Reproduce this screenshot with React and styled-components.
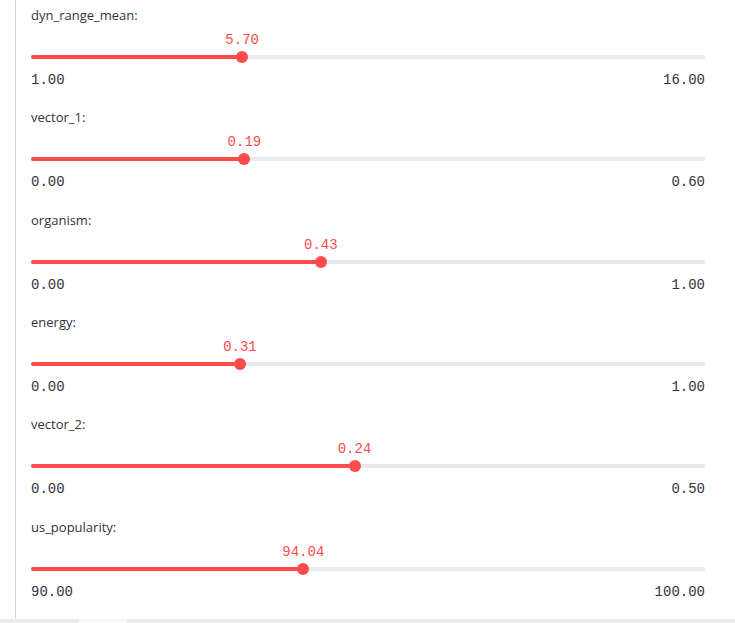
import React from 'react'
import styled, { createGlobalStyle } from 'styled-components'

const GlobalStyle = createGlobalStyle`
  html, body {
    margin: 0;
    padding: 0;
    background: #ffffff;
    overflow: hidden;
  }
`

const sliders = [
    { label: 'dyn_range_mean:', value: 5.7, min: 1, max: 16 },
    { label: 'vector_1:', value: 0.19, min: 0, max: 0.6 },
    { label: 'organism:', value: 0.43, min: 0, max: 1 },
    { label: 'energy:', value: 0.31, min: 0, max: 1 },
    { label: 'vector_2:', value: 0.24, min: 0, max: 0.5 },
    { label: 'us_popularity:', value: 94.04, min: 90, max: 100 },
]

const Page = styled.div`
  display: flex;
  flex-direction: column;
  width: 735px;
  height: 623px;
`

const Panel = styled.div`
  height: 619px;
  margin-left: 15px;
  width: 702px;
  border-left: 1px solid #d6d6d6;
  border-right: 1px solid #d6d6d6;
  padding: 0 13px 0 15px;
  box-sizing: content-box;
  display: flex;
  flex-direction: column;
  overflow: hidden;
`

const ScrollStrip = styled.div`
  height: 4px;
  background: #ececec;
  display: flex;
`

const ScrollThumb = styled.div`
  margin-left: 79px;
  width: 48px;
  background: #f7f7f7;
`

const Block = styled.div`
  height: 102.33px;
  flex-shrink: 0;
  display: flex;
  flex-direction: column;
  width: 674px;
`

const Label = styled.div`
  height: 30px;
  line-height: 31px;
  font-family: 'Source Sans Pro', 'Open Sans', 'Noto Sans', sans-serif;
  font-size: 13px;
  color: rgb(49, 51, 63);
`

const ValueRow = styled.div`
  position: relative;
  height: 19px;
`

const ValueText = styled.div`
  position: absolute;
  bottom: 0;
  transform: translateX(-50%);
  line-height: 17px;
  font-family: 'Liberation Mono', monospace;
  font-size: 14px;
  color: #ff4b4b;
  white-space: nowrap;
`

const TrackRow = styled.div`
  position: relative;
  height: 16px;
  display: flex;
  align-items: center;
`

const Track = styled.div`
  width: 100%;
  height: 4px;
  border-radius: 4px;
  background: #e6e9ef;
  overflow: hidden;
`

const Fill = styled.div`
  height: 100%;
  background: #ff4b4b;
`

const Thumb = styled.div`
  position: absolute;
  top: 50%;
  width: 12px;
  height: 12px;
  border-radius: 50%;
  background: #ff4b4b;
  transform: translate(-50%, -50%);
`

const MinMax = styled.div`
  display: flex;
  justify-content: space-between;
  line-height: 30px;
  font-family: 'Liberation Mono', monospace;
  font-size: 14px;
  color: rgb(49, 51, 63);
`

function Slider({ label, value, min, max }) {
    const pct = ((value - min) / (max - min)) * 100
    return (
        <Block>
            <Label>{label}</Label>
            <ValueRow>
                <ValueText style={{ left: `${pct}%` }}>{value.toFixed(2)}</ValueText>
            </ValueRow>
            <TrackRow>
                <Track>
                    <Fill style={{ width: `${pct}%` }} />
                </Track>
                <Thumb style={{ left: `${pct}%` }} />
            </TrackRow>
            <MinMax>
                <span>{min.toFixed(2)}</span>
                <span>{max.toFixed(2)}</span>
            </MinMax>
        </Block>
    )
}

export default function App() {
    return (
        <Page>
            <GlobalStyle />
            <Panel>
                {sliders.map((s) => (
                    <Slider key={s.label} {...s} />
                ))}
            </Panel>
            <ScrollStrip>
                <ScrollThumb />
            </ScrollStrip>
        </Page>
    )
}
